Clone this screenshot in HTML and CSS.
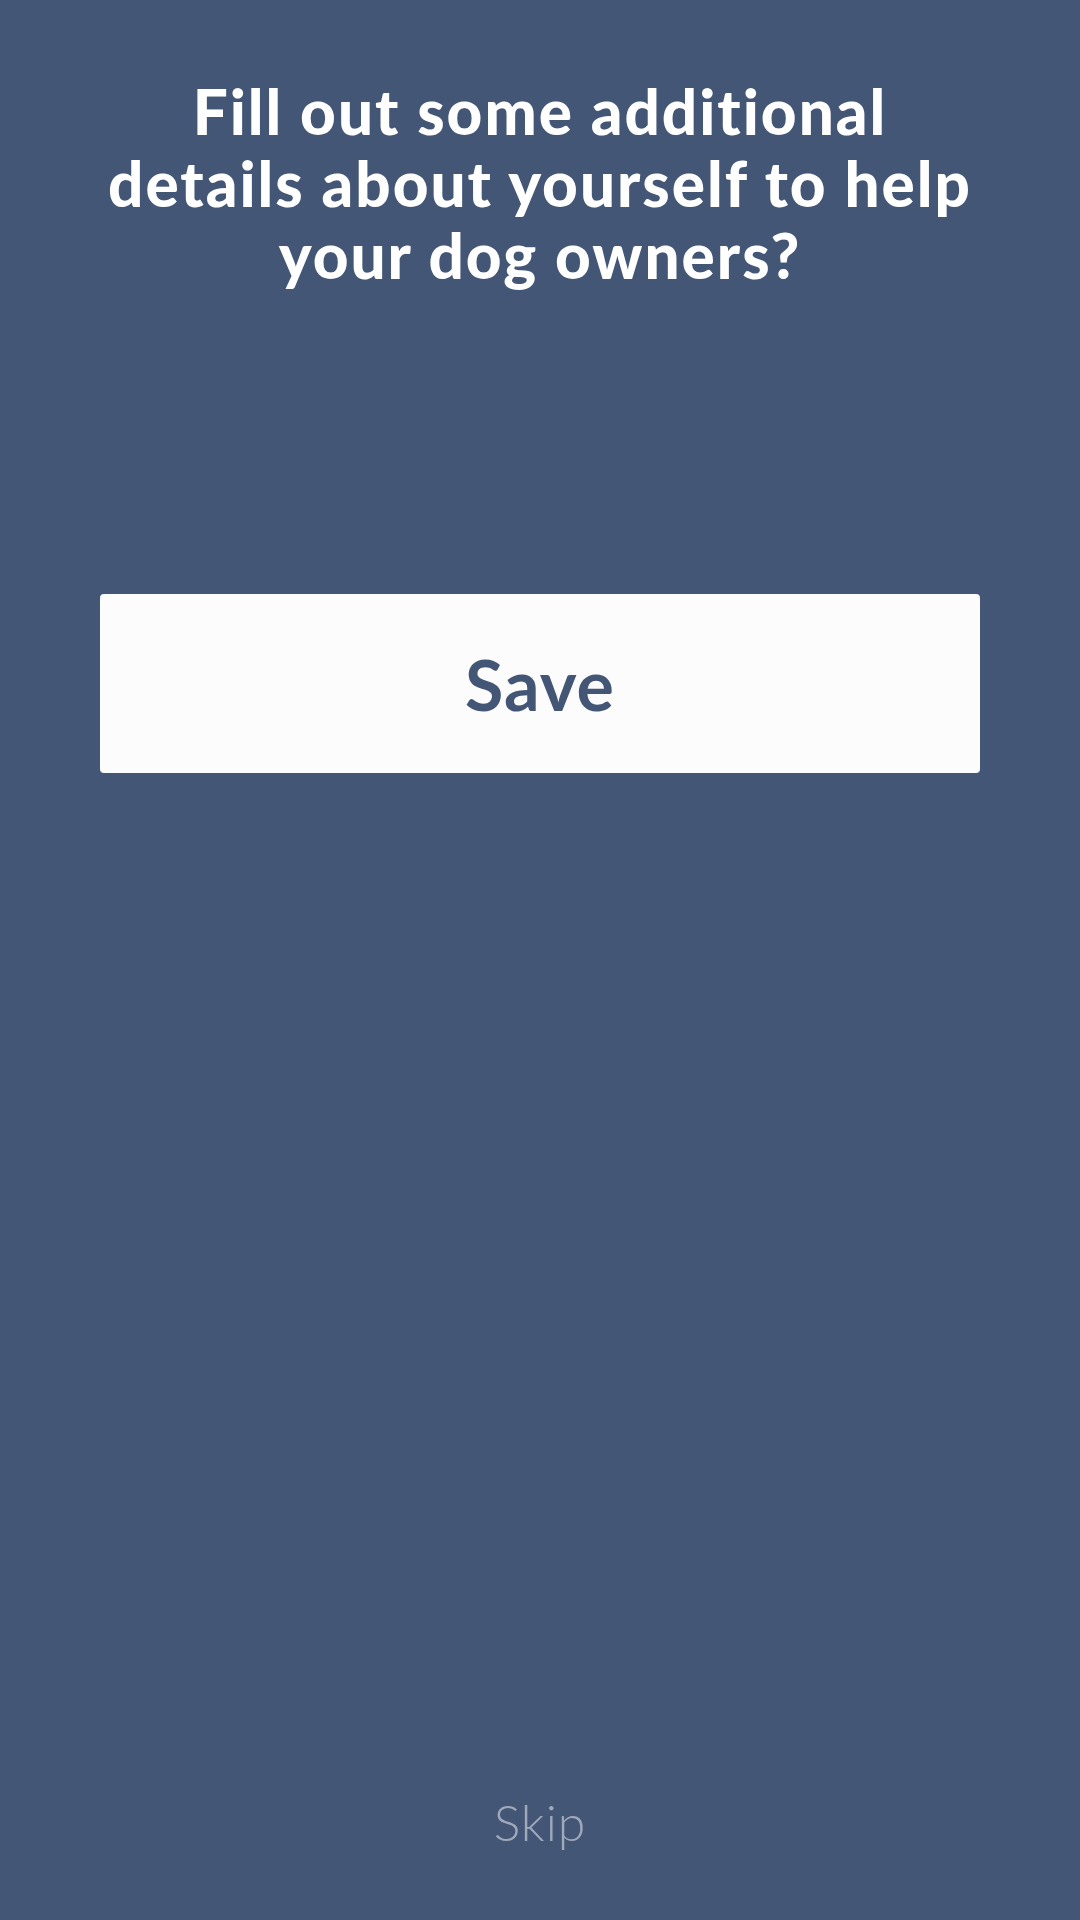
FILE: index.html
```html
<!DOCTYPE html>
<html>
<head>
<meta charset="utf-8">
<link rel="stylesheet" href="styles.css">
</head>
<body>
<main class="screen">
  <h1 class="title">Fill out some additional<br>details about yourself to help<br>your dog owners?</h1>
  <button class="save">Save</button>
  <div class="spacer"></div>
  <a class="skip">Skip</a>
</main>
</body>
</html>
```
FILE: styles.css
```css
html, body {
  margin: 0;
  padding: 0;
  background: #435675;
}
.screen {
  width: 1080px;
  height: 1920px;
  display: flex;
  flex-direction: column;
  align-items: center;
  box-sizing: border-box;
  padding: 75px 0 0;
}
.title {
  margin: 0;
  width: 1000px;
  text-align: center;
  font-family: "Lato", sans-serif;
  font-weight: 900;
  font-size: 62px;
  line-height: 72px;
  letter-spacing: 2px;
  white-space: nowrap;
  color: #ffffff;
}
.save {
  margin-top: 303px;
  width: 880px;
  height: 179px;
  border: none;
  border-radius: 4px;
  background: #fcfcfc;
  color: #435675;
  font-family: "Lato", sans-serif;
  font-weight: 700;
  font-size: 70px;
  letter-spacing: 1px;
  padding: 0;
}
.spacer {
  flex: 1;
}
.skip {
  font-family: "Lato", sans-serif;
  font-weight: 300;
  font-size: 50px;
  letter-spacing: 1px;
  color: #a0a8bb;
  margin-bottom: 68px;
}
```
